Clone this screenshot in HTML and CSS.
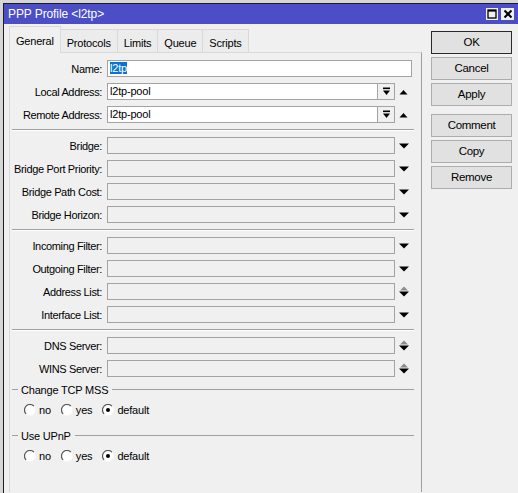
FILE: index.html
```html
<!DOCTYPE html>
<html>
<head>
<meta charset="utf-8">
<link rel="stylesheet" href="styles.css">
</head>
<body>
<div class="desk">
  <div class="win">
    <div class="titlebar">
      <span class="title">PPP Profile &lt;l2tp&gt;</span>
      <div class="tbtns">
        <span class="tbtn"><svg width="10" height="10" viewBox="0 0 10 10"><rect x="1" y="1" width="8" height="8" fill="none" stroke="#000" stroke-width="1.3"/><rect x="1" y="1" width="8" height="1.6" fill="#000"/></svg></span>
        <span class="tbtn wide"><svg width="10" height="10" viewBox="0 0 10 10"><path d="M1.5 1.5 L8.5 8.5 M8.5 1.5 L1.5 8.5" stroke="#000" stroke-width="2"/></svg></span>
      </div>
    </div>
    <div class="body">
      <div class="left">
        <div class="tabs">
          <div class="tab active">General</div>
          <div class="tab">Protocols</div>
          <div class="tab">Limits</div>
          <div class="tab">Queue</div>
          <div class="tab">Scripts</div>
        </div>
        <div class="panel">
          <div class="row"><span class="lbl">Name:</span><div class="field"><div class="input on"><span class="sel">l2tp</span></div></div></div>
          <div class="row"><span class="lbl">Local Address:</span><div class="field"><div class="input on">l2tp-pool</div><span class="dd"><svg width="9" height="9" viewBox="0 0 9 9"><rect x="1" y="0.5" width="7" height="1.6" fill="#000"/><polygon points="1,3.5 8,3.5 4.5,8" fill="#000"/></svg></span><span class="arr"><svg width="9" height="6" viewBox="0 0 9 6"><polygon points="0.5,5.5 8.5,5.5 4.5,1" fill="#000"/></svg></span></div></div>
          <div class="row"><span class="lbl">Remote Address:</span><div class="field"><div class="input on">l2tp-pool</div><span class="dd"><svg width="9" height="9" viewBox="0 0 9 9"><rect x="1" y="0.5" width="7" height="1.6" fill="#000"/><polygon points="1,3.5 8,3.5 4.5,8" fill="#000"/></svg></span><span class="arr"><svg width="9" height="6" viewBox="0 0 9 6"><polygon points="0.5,5.5 8.5,5.5 4.5,1" fill="#000"/></svg></span></div></div>
          <div class="sep"></div>
          <div class="row"><span class="lbl">Bridge:</span><div class="field"><div class="input"></div><span class="arr"><svg width="10" height="6" viewBox="0 0 10 6"><polygon points="0,0.5 10,0.5 5,5.5" fill="#000"/></svg></span></div></div>
          <div class="row"><span class="lbl">Bridge Port Priority:</span><div class="field"><div class="input"></div><span class="arr"><svg width="10" height="6" viewBox="0 0 10 6"><polygon points="0,0.5 10,0.5 5,5.5" fill="#000"/></svg></span></div></div>
          <div class="row"><span class="lbl">Bridge Path Cost:</span><div class="field"><div class="input"></div><span class="arr"><svg width="10" height="6" viewBox="0 0 10 6"><polygon points="0,0.5 10,0.5 5,5.5" fill="#000"/></svg></span></div></div>
          <div class="row"><span class="lbl">Bridge Horizon:</span><div class="field"><div class="input"></div><span class="arr"><svg width="10" height="6" viewBox="0 0 10 6"><polygon points="0,0.5 10,0.5 5,5.5" fill="#000"/></svg></span></div></div>
          <div class="sep"></div>
          <div class="row"><span class="lbl">Incoming Filter:</span><div class="field"><div class="input"></div><span class="arr"><svg width="10" height="6" viewBox="0 0 10 6"><polygon points="0,0.5 10,0.5 5,5.5" fill="#000"/></svg></span></div></div>
          <div class="row"><span class="lbl">Outgoing Filter:</span><div class="field"><div class="input"></div><span class="arr"><svg width="10" height="6" viewBox="0 0 10 6"><polygon points="0,0.5 10,0.5 5,5.5" fill="#000"/></svg></span></div></div>
          <div class="row"><span class="lbl">Address List:</span><div class="field"><div class="input"></div><span class="arr"><svg width="10" height="11" viewBox="0 0 10 11"><polygon points="1,4.5 9,4.5 5,0.5" fill="#8c8c8c"/><polygon points="0,5.5 10,5.5 5,10.5" fill="#000"/></svg></span></div></div>
          <div class="row"><span class="lbl">Interface List:</span><div class="field"><div class="input"></div><span class="arr"><svg width="10" height="6" viewBox="0 0 10 6"><polygon points="0,0.5 10,0.5 5,5.5" fill="#000"/></svg></span></div></div>
          <div class="sep"></div>
          <div class="row"><span class="lbl">DNS Server:</span><div class="field"><div class="input"></div><span class="arr"><svg width="10" height="11" viewBox="0 0 10 11"><polygon points="1,4.5 9,4.5 5,0.5" fill="#8c8c8c"/><polygon points="0,5.5 10,5.5 5,10.5" fill="#000"/></svg></span></div></div>
          <div class="row"><span class="lbl">WINS Server:</span><div class="field"><div class="input"></div><span class="arr"><svg width="10" height="11" viewBox="0 0 10 11"><polygon points="1,4.5 9,4.5 5,0.5" fill="#8c8c8c"/><polygon points="0,5.5 10,5.5 5,10.5" fill="#000"/></svg></span></div></div>
          <div class="ghead"><span class="glbl">Change TCP MSS</span></div>
          <div class="radios">
            <span class="radio"><svg width="12" height="12" viewBox="0 0 12 12"><circle cx="6" cy="6" r="5.5" fill="#fff"/><path d="M9.9 2.1 A5.5 5.5 0 0 0 2.1 9.9" fill="none" stroke="#555" stroke-width="1.2"/></svg>no</span>
            <span class="radio"><svg width="12" height="12" viewBox="0 0 12 12"><circle cx="6" cy="6" r="5.5" fill="#fff"/><path d="M9.9 2.1 A5.5 5.5 0 0 0 2.1 9.9" fill="none" stroke="#555" stroke-width="1.2"/></svg>yes</span>
            <span class="radio"><svg width="12" height="12" viewBox="0 0 12 12"><circle cx="6" cy="6" r="5.5" fill="#fff"/><path d="M9.9 2.1 A5.5 5.5 0 0 0 2.1 9.9" fill="none" stroke="#555" stroke-width="1.2"/><circle cx="6" cy="6" r="2" fill="#000"/></svg>default</span>
          </div>
          <div class="ghead second"><span class="glbl">Use UPnP</span></div>
          <div class="radios">
            <span class="radio"><svg width="12" height="12" viewBox="0 0 12 12"><circle cx="6" cy="6" r="5.5" fill="#fff"/><path d="M9.9 2.1 A5.5 5.5 0 0 0 2.1 9.9" fill="none" stroke="#555" stroke-width="1.2"/></svg>no</span>
            <span class="radio"><svg width="12" height="12" viewBox="0 0 12 12"><circle cx="6" cy="6" r="5.5" fill="#fff"/><path d="M9.9 2.1 A5.5 5.5 0 0 0 2.1 9.9" fill="none" stroke="#555" stroke-width="1.2"/></svg>yes</span>
            <span class="radio"><svg width="12" height="12" viewBox="0 0 12 12"><circle cx="6" cy="6" r="5.5" fill="#fff"/><path d="M9.9 2.1 A5.5 5.5 0 0 0 2.1 9.9" fill="none" stroke="#555" stroke-width="1.2"/><circle cx="6" cy="6" r="2" fill="#000"/></svg>default</span>
          </div>
        </div>
      </div>
      <div class="btns">
        <div class="btn def">OK</div>
        <div class="btn">Cancel</div>
        <div class="btn">Apply</div>
        <div class="btn gapb">Comment</div>
        <div class="btn">Copy</div>
        <div class="btn">Remove</div>
      </div>
    </div>
  </div>
</div>
</body>
</html>
```
FILE: styles.css
```css
* { box-sizing: border-box; }
body {
  margin: 0;
  font: 11px "Liberation Sans", Arial, sans-serif;
  letter-spacing: -0.2px;
  color: #000;
  background: #d6d6d6;
}
.desk {
  width: 518px;
  height: 493px;
  padding: 3px 0 0 3px;
  background: #d6d6d6;
  overflow: hidden;
}
.win {
  height: 490px;
  border-left: 1px solid #1e1e1e;
  border-top: 1px solid #1e1e1e;
  background: #f0f0f0;
}
.titlebar {
  height: 20px;
  background: #4b4ec6;
  display: flex;
  align-items: center;
  justify-content: space-between;
  padding: 0 4px 0 4px;
}
.title { color: #fff; font-size: 12px; letter-spacing: -0.1px; }
.tbtns { display: flex; gap: 3px; }
.tbtn {
  width: 12px;
  height: 12px;
  background: #f0f0f0;
  display: flex;
  align-items: center;
  justify-content: center;
}
.tbtn.wide { width: 13px; }
.body { display: flex; padding-left: 5px; }
.left { width: 413px; padding-top: 2px; }
.tabs {
  display: flex;
  align-items: flex-end;
  height: 26px;
  position: relative;
  z-index: 1;
}
.tab {
  height: 23px;
  padding: 7px 6px 0;
  line-height: 13px;
  border: 1px solid #d9d9d9;
  border-bottom: none;
  background: #ececec;
  margin-left: -1px;
}
.tab.active {
  height: 27px;
  margin-bottom: -1px;
  margin-left: 0;
  padding-top: 8px;
  background: #f0f0f0;
}
.panel {
  height: 440px;
  border-top: 1px solid #d9d9d9;
  border-left: 1px solid #d9d9d9;
  border-right: 1px solid #a0a0a0;
  padding-top: 7px;
  display: flex;
  flex-direction: column;
  gap: 6px;
}
.row { display: flex; align-items: center; height: 17px; }
.lbl { width: 92px; text-align: right; margin-right: 5px; white-space: nowrap; letter-spacing: -0.35px; }
.field { width: 305px; height: 17px; display: flex; }
.input {
  flex: 1;
  border: 1px solid #a3a3a3;
  background: #f0f0f0;
  line-height: 15px;
  padding-left: 2px;
  white-space: nowrap;
  overflow: hidden;
}
.input.on { background: #fff; }
.sel { background: #0a74d6; color: #fff; }
.dd {
  width: 17px;
  border: 1px solid #a3a3a3;
  border-left: none;
  background: #f0f0f0;
  display: flex;
  align-items: center;
  justify-content: center;
}
.arr {
  width: 17px;
  display: flex;
  align-items: center;
  justify-content: center;
}
.sep {
  height: 2px;
  border-top: 1px solid #a0a0a0;
  border-bottom: 1px solid #fff;
  margin: 0 7px 0 2px;
}
.ghead {
  display: flex;
  align-items: center;
  height: 13px;
  margin: 0 7px 0 2px;
}
.ghead::before {
  content: "";
  width: 6px;
  border-top: 1px solid #a0a0a0;
}
.ghead::after {
  content: "";
  flex: 1;
  border-top: 1px solid #a0a0a0;
}
.glbl { padding: 0 4px 0 3px; }
.ghead.second { margin-top: 7px; }
.radios {
  display: flex;
  align-items: center;
  height: 13px;
  margin-top: 1px;
  padding-left: 14px;
}
.radio {
  display: flex;
  align-items: center;
  gap: 3px;
  margin-right: 10px;
}
.btns {
  width: 81px;
  margin-left: 9px;
  padding-top: 7px;
  display: flex;
  flex-direction: column;
  gap: 3px;
}
.btn {
  height: 23px;
  border: 1px solid #adadad;
  background: #e1e1e1;
  text-align: center;
  line-height: 21px;
  font-size: 11.5px;
  letter-spacing: -0.3px;
}
.btn.def { border-color: #2a2a2a; }
.btn.gapb { margin-top: 5px; }
```
